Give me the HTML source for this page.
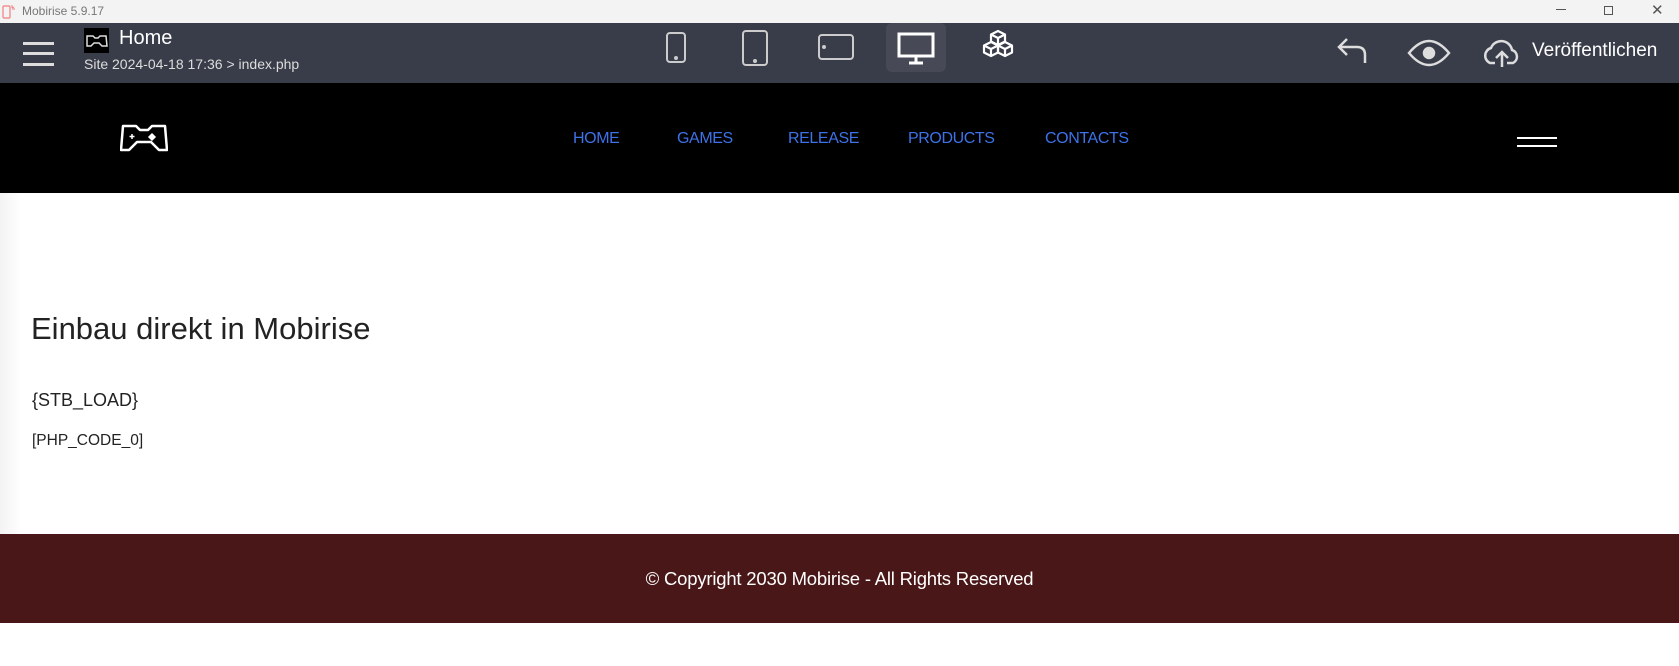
<!DOCTYPE html>
<html><head><meta charset="utf-8"><style>
*{margin:0;padding:0;box-sizing:border-box}
body{width:1679px;height:666px;overflow:hidden;background:#fff;font-family:"Liberation Sans",sans-serif;position:relative}
.abs{position:absolute}
#title{top:0;left:0;width:1679px;height:23px;background:#f3f3f3;color:#777;font-size:12px}
#tb{top:23px;left:0;width:1679px;height:60px;background:#393c49;color:#fff}
#nav{top:83px;left:0;width:1679px;height:110px;background:#000}
#nav a{position:absolute;top:47px;color:#3d72e8;font-size:16px;letter-spacing:-0.4px;text-decoration:none}
#foot{top:534px;left:0;width:1679px;height:89px;background:#4a1718;color:#fff;font-size:18.5px;letter-spacing:-0.2px;text-align:center;line-height:89px}
</style></head><body>
<div id="title" class="abs">
 <svg class="abs" style="left:2px;top:3px" width="16" height="16" viewBox="0 0 16 16"><rect x="1" y="3" width="7" height="12" rx="1" fill="none" stroke="#f08080" stroke-width="1.2"/><path d="M10 2v3M12 4l-2 1M13 6h-3" stroke="#f08080"/></svg>
 <span class="abs" style="left:22px;top:4px">Mobirise 5.9.17</span>
 <span class="abs" style="left:1556px;top:9px;width:10px;height:1px;background:#555"></span>
 <span class="abs" style="left:1604px;top:6px;width:9px;height:9px;border:1px solid #555"></span>
 <span class="abs" style="left:1651px;top:1px;font-size:15px;color:#555">✕</span>
</div>
<div id="tb" class="abs">
 <div class="abs" style="left:23px;top:19px;width:31px;height:3px;background:#ddd;box-shadow:0 10px 0 #ddd,0 21px 0 #ddd"></div>
 <svg class="abs" style="left:84px;top:5px" width="25" height="25" viewBox="0 0 25 25"><rect width="25" height="25" fill="#000"/><path d="M3 8h6l2 2h3l2-2h6l1 10h-5l-3-3h-5l-3 3H3z" fill="none" stroke="#ddd" stroke-width="1.5"/></svg>
 <span class="abs" style="left:119px;top:4px;font-size:20px">Home</span>
 <span class="abs" style="left:84px;top:33px;font-size:14px;color:#ddd">Site 2024-04-18 17:36 &gt; index.php</span>
 <div class="abs" style="left:886px;top:0;width:60px;height:49px;background:#474a56;border-radius:6px"></div>
 <svg class="abs" style="left:660px;top:0" width="360" height="50" viewBox="0 0 360 50" fill="none" stroke="#ccc" stroke-width="2">
  <rect x="7" y="10" width="18" height="29" rx="3"/><circle cx="16" cy="35" r="1" fill="#ccc"/>
  <rect x="83" y="8" width="24" height="34" rx="3"/><circle cx="95" cy="38" r="1" fill="#ccc"/>
  <rect x="159" y="12" width="34" height="24" rx="3"/><circle cx="164" cy="24" r="1" fill="#ccc"/>
  <rect x="239" y="11" width="34" height="22" stroke="#fff" stroke-width="3"/><path d="M256 33v6M249 40h14" stroke="#fff" stroke-width="3"/>
  <g stroke="#fff" stroke-width="2.2" stroke-linejoin="round">
   <path d="M338 8l-7 3.5v7l7 3.5 7-3.5v-7zM331 11.5l7 3.5 7-3.5M338 15v7"/>
   <path d="M331 19l-7 3.5v7l7 3.5 7-3.5v-7zM324 22.5l7 3.5 7-3.5M331 26v7"/>
   <path d="M345 19l-7 3.5v7l7 3.5 7-3.5v-7zM338 22.5l7 3.5 7-3.5M345 26v7"/>
  </g>
 </svg>
 <svg class="abs" style="left:1335px;top:12px" width="200" height="36" viewBox="0 0 200 36" fill="none" stroke="#ddd" stroke-width="2.5">
  <path d="M12 4l-8 8 8 8M4 12h18q8 0 8 8v8"/>
  <path d="M74 18q10-12 20-12t20 12q-10 12-20 12t-20-12z"/><circle cx="94" cy="18" r="5" fill="#ddd"/>
  <path d="M160 28h-5a8 8 0 0 1 1-15 11 11 0 0 1 21 2 7 7 0 0 1 1 13h-6M167 32V18M161 23l6-6 6 6"/>
 </svg>
 <span class="abs" style="left:1532px;top:17px;font-size:19px">Veröffentlichen</span>
</div>
<div id="nav" class="abs">
 <svg class="abs" style="left:120px;top:40px" width="48" height="30" viewBox="0 0 48 30"><path d="M3 3h13l4 4h8l4-4h13l2 24h-8l-8-8H17l-8 8H1z" fill="none" stroke="#fff" stroke-width="2.5" stroke-linejoin="round"/><path d="M12 11v5M9.5 13.5h5M32 11l3 3-3 3-3-3z" stroke="#fff" fill="#fff" stroke-width="1.5"/></svg>
 <a style="left:573px">HOME</a><a style="left:677px">GAMES</a><a style="left:788px">RELEASE</a><a style="left:908px">PRODUCTS</a><a style="left:1045px">CONTACTS</a>
 <div class="abs" style="left:1517px;top:54px;width:40px;height:2px;background:#fff;box-shadow:0 8px 0 #fff"></div>
</div>
<div class="abs" style="left:0;top:193px;width:22px;height:341px;background:linear-gradient(to right,#f3f3f3,#fff)"></div>
<div class="abs" style="left:31px;top:311px;font-size:31px;color:#222">Einbau direkt in Mobirise</div>
<div class="abs" style="left:32px;top:390px;font-size:18px;color:#222">{STB_LOAD}</div>
<div class="abs" style="left:32px;top:432px;font-size:15.5px;color:#222">[PHP_CODE_0]</div>
<div id="foot" class="abs">© Copyright 2030 Mobirise - All Rights Reserved</div>
</body></html>
